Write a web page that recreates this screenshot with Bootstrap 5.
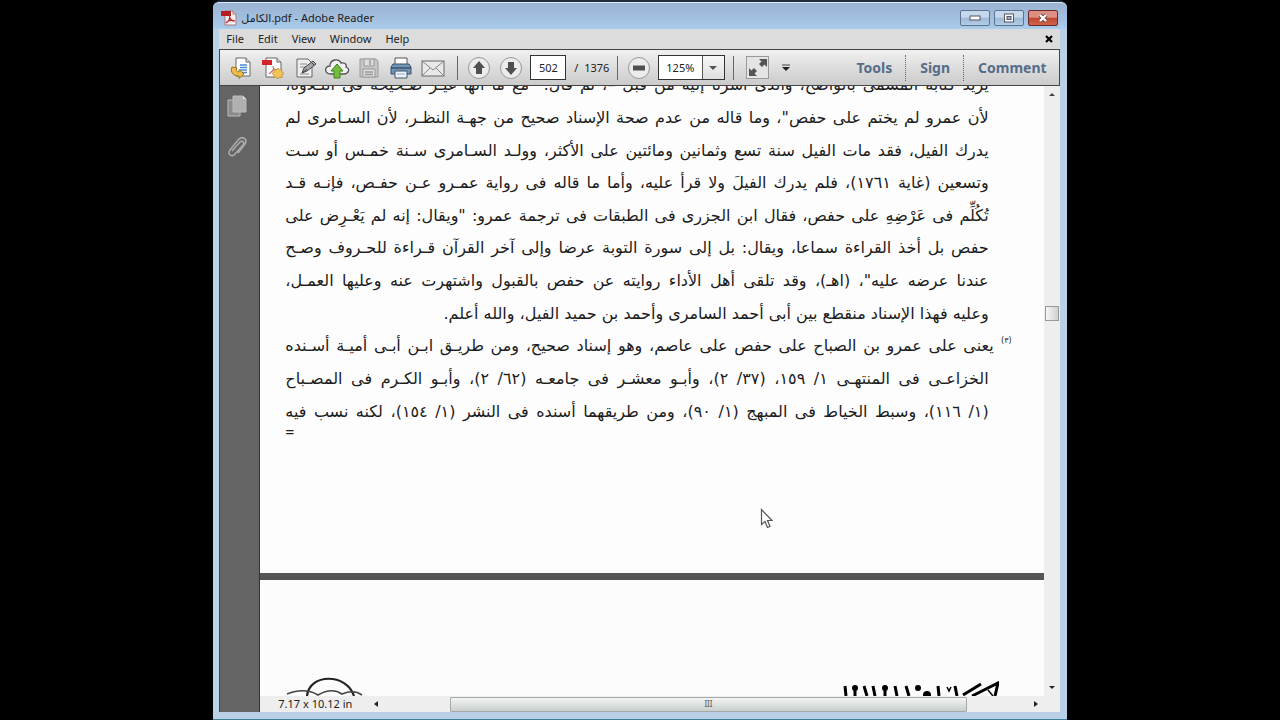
<!DOCTYPE html>
<html lang="en">
<head>
<meta charset="utf-8">
<meta name="viewport" content="width=device-width, initial-scale=1">
<title>الكامل.pdf - Adobe Reader</title>
<link href="https://cdn.jsdelivr.net/npm/bootstrap@5.3.0/dist/css/bootstrap.min.css" rel="stylesheet">
<style>
  body { background: #000; font-family: "Noto Sans", "DejaVu Sans", sans-serif; font-size: 12px; line-height: 16px; color: #222; }
  button { border: 0; background: none; padding: 0; color: inherit; }
  .app-window { background: #b9d0e6; border-top: 2px solid #1f2d3d; border-bottom: 1px solid #3d7f96; border-radius: 8px 8px 0 0; padding: 0 7px 7px 6px; }
  .title-bar { height: 27px; margin: 0 -7px 0 -6px; padding: 0 9px 0 8px; border-radius: 6px 6px 0 0; border-top: 1px solid #dbe8f5; background: linear-gradient(#9ab3d2, #a3bfdf 60%, #a9cdec); }
  .title-text { font-size: 11px; }
  .title-bar > * { margin-top: 7px; }
  .caption-btn { width: 30px; height: 16px; border: 1px solid #5b7391; border-radius: 2px; background: linear-gradient(#c6d8ec 45%, #9db8d5 50%, #b4cde6); }
  .caption-close { border-color: #6b2a28; background: linear-gradient(#dc9084 45%, #c04531 50%, #d0664a); }
  .menu-strip { height: 20px; background: #dcdcdc; }
  .menu-strip button { padding: 0 7px; font-size: 11px; }
  .tool-strip { height: 37px; border: 1px solid #444; background: linear-gradient(#f0f0f0, #cbcbcb); padding-left: 5px; }
  .tool-btn { width: 32px; height: 28px; }
  .rule-v { width: 1px; height: 24px; background: #666; }
  .dot-v { height: 26px; border-left: 1px dotted #666; margin: 0 14px 0 13px; }
  .num-box { width: 36px; height: 25px; border: 1px solid #333; background: #fff; text-align: center; font-size: 11px; padding: 0; color: #222; }
  .zoom-box { width: 67px; height: 25px; border: 1px solid #333; padding: 0 0 0 7px; font-size: 11px; color: #222; appearance: none;
    background: linear-gradient(#555, #555) 43px 0 / 1px 100% no-repeat, linear-gradient(#f8f8f8, #dedede) right / 21px 100% no-repeat #fff; }
  .zoom-arrow { right: 8px; top: 11px; border: 4px solid transparent; border-top-color: #555; border-bottom: 0; }
  .pane-link { font-size: 14px; font-weight: 700; color: #566d8a; text-decoration: none; }
  .side-pane { width: 41px; background: #646464; border-left: 1px solid #444; border-right: 1px solid #333; padding: 8px 5px 0 0; }
  .view-area { background: #565456; }
  .sheet-main { flex: 0 0 487px; background: #fdfdfd; padding: 0 55px 0 25px; }
  .sheet-next { margin-top: 7px; background: #fdfcfd; padding: 0 45px 0 25px; }
  .arabic { margin-top: -17px; height: 359px; display: grid; grid-template-columns: minmax(0, 1fr); grid-auto-rows: 1fr; align-items: center; font-family: "DejaVu Sans", sans-serif; font-size: 16px; line-height: 32px; color: #1c1c1c; }
  .arabic .full { text-align: justify; text-align-last: justify; white-space: nowrap; }
  .note-line { margin-right: -23px; }
  .note-mark { width: 18px; font-size: 8px; line-height: 22px; }
  .carry { font-size: 16px; line-height: 8px; }
  .scroll-v { width: 16px; background: #eeeeee; }
  .scroll-v .thumb { width: 14px; height: 15px; border: 1px solid #999; background: linear-gradient(90deg, #f6f6f6, #d0d0d0); }
  .foot-strip { height: 16px; background: #edeeed; }
  .size-label { width: 108px; padding-left: 18px; font-size: 11px; white-space: nowrap; }
  .scroll-h { margin-right: 20px; }
  .scroll-h .thumb { flex: 516 0 0; height: 15px; border: 1px solid #a5aaa7; border-radius: 1px; background: linear-gradient(#f2f4f3, #c9cfcc); color: #555; font-size: 8px; line-height: 12px; }
  .pointer { left: 500px; top: 422px; }
</style>
</head>
<body>
<div class="container-fluid">
 <div class="row justify-content-center">
  <main class="col-8 vh-100 d-flex flex-column app-window">
   <header class="title-bar d-flex align-items-start">
     <svg class="me-1" width="16" height="16" viewBox="0 0 16 16" aria-hidden="true"><path d="M4 1h8l3 3v11H4z" fill="#f7efef" stroke="#a77"/><path d="M12 1v3h3" fill="#ddd" stroke="#a77"/><path d="M0 1h10v5H0z" fill="#b51f24"/><path d="M5 13c3-2 4-5 3.500-7M5 13c2-3 6-3 9-2M8.500 7c1 3 3 4 5 4" fill="none" stroke="#b92a2e" stroke-width="1.300"/></svg>
     <span class="title-text" dir="ltr"><bdi>الكامل</bdi>.pdf - Adobe Reader</span>
     <div class="d-flex gap-1 ms-auto">
       <button class="caption-btn d-flex align-items-center justify-content-center" aria-label="Minimize"><svg width="12" height="6"><rect x="1" y="1" width="10" height="4" fill="#fff" stroke="#556"/></svg></button>
       <button class="caption-btn d-flex align-items-center justify-content-center" aria-label="Maximize"><svg width="12" height="10"><rect x="1.500" y="1" width="9" height="8" fill="#fff" stroke="#556"/><rect x="4" y="3.500" width="4" height="3" fill="#9cb4cf" stroke="#556"/></svg></button>
       <button class="caption-btn caption-close d-flex align-items-center justify-content-center" aria-label="Close"><svg width="12" height="10"><path d="M3 2l6 6M9 2L3 8" stroke="#644" stroke-width="4"/><path d="M3 2l6 6M9 2L3 8" stroke="#fff" stroke-width="2.400"/></svg></button>
     </div>
   </header>
   <nav class="menu-strip d-flex align-items-center" aria-label="Menu">
     <button>File</button><button>Edit</button><button>View</button><button>Window</button><button>Help</button>
     <button class="ms-auto d-flex" aria-label="Close document"><svg width="8" height="8"><path d="M1 1l6 6M7 1L1 7" stroke="#000" stroke-width="2.200"/></svg></button>
   </nav>
   <div class="tool-strip d-flex align-items-center">
     <button class="tool-btn" aria-label="Open"><svg width="24" height="24" viewBox="0 0 24 24"><path d="M7 2h10l4 4v14H7z" fill="#fff" stroke="#666"/><path d="M17 2v4h4" fill="#ddd" stroke="#666"/><path d="M11 9h7M11 11.500h7M11 14h7M13 16.500h5" stroke="#4b8fd0" stroke-width="1.300"/><path d="M3 11c-2 5 1 9 7 9v2.500l5-4.500-5-4.500V16c-3 0-3-2-2-4z" fill="#f2bd4b" stroke="#99701e"/></svg></button>
     <button class="tool-btn" aria-label="Create PDF"><svg width="24" height="24" viewBox="0 0 24 24"><path d="M5 2h11l4 4v15H5z" fill="#fafafa" stroke="#666"/><path d="M16 2v4h4" fill="#ddd" stroke="#666"/><path d="M1 4h10v5H1z" fill="#d5232b"/><path d="M8 18c4-2 5-5 4-8M8 18c3-4 5-4 8-4M12 12l4 3" fill="none" stroke="#b66"/><path d="M17 12l1.500 2 2.500-.5-.2 2.500 2.200 1.500-2 1.500.2 2.500-2.500-.3L17 23l-1.700-1.800-2.500.3.200-2.500-2-1.500 2.200-1.500-.2-2.500 2.500.5z" fill="#f3c35b" stroke="#c08f2d" stroke-width=".8"/></svg></button>
     <button class="tool-btn" aria-label="Edit"><svg width="24" height="24" viewBox="0 0 24 24"><path d="M4 3h11l4 4v14H4z" fill="#eee" stroke="#666"/><path d="M7 8h7M7 11h6M7 18h9" stroke="#888"/><path d="M9 17l2-5 9-7 3 3-9 7z" fill="#a3a6aa" stroke="#444"/><path d="M9 17l5-4M18 6l3 3" stroke="#444"/></svg></button>
     <button class="tool-btn" aria-label="Upload"><svg width="26" height="24" viewBox="0 0 26 24"><path d="M7 18C0 18 0 10 6 10 6 3 15 2 17 7c5-1 6 3 5 4 5 2 2 7-2 7z" fill="#f1f1f1" stroke="#555" stroke-width="1.300"/><path d="M13 8l6 7h-3v7h-6v-7H7z" fill="#72bd3b" stroke="#3e8122"/></svg></button>
     <button class="tool-btn" aria-label="Save" disabled><svg width="22" height="22" viewBox="0 0 22 22"><path d="M2 2h16l2 2v16H2z" fill="#c6c6c6" stroke="#999"/><path d="M6 2h10v7H6zM5 12h12v8H5z" fill="#ddd" stroke="#999"/><path d="M12 3v5M7 15h8M7 17.500h8" stroke="#999" stroke-width="1.500"/></svg></button>
     <button class="tool-btn" aria-label="Print"><svg width="24" height="24" viewBox="0 0 24 24"><path d="M6 2h12v8H6z" fill="#fff" stroke="#555"/><path d="M4 8h16l2 3v7H2v-7z" fill="#7195b5" stroke="#38526d"/><path d="M2 12h20" stroke="#38526d" stroke-width="1.500"/><path d="M6 15h12v7H6z" fill="#e9f2fa" stroke="#456"/><path d="M8 18h8" stroke="#aab"/></svg></button>
     <button class="tool-btn" aria-label="E-mail"><svg width="24" height="22" viewBox="0 0 24 22"><rect x="1" y="4" width="22" height="15" fill="#e9e9e9" stroke="#666"/><path d="M1 4l11 9L23 4M2 18l7-7M22 18l-7-7" fill="none" stroke="#888"/></svg></button>
     <div class="rule-v ms-2 me-1"></div>
     <button class="tool-btn" aria-label="Previous page"><svg width="24" height="24" viewBox="0 0 24 24"><circle cx="13" cy="12" r="10.500" fill="#ececec" stroke="#999"/><path d="M13 5l6 7h-3v6h-6v-6H7z" fill="#505050"/></svg></button>
     <button class="tool-btn" aria-label="Next page"><svg width="24" height="24" viewBox="0 0 24 24"><circle cx="13" cy="12" r="10.500" fill="#ececec" stroke="#999"/><path d="M13 19l6-7h-3V6h-6v6H7z" fill="#505050"/></svg></button>
     <input class="num-box ms-1" type="text" value="502" aria-label="Page number">
     <span class="title-text ms-2">/&nbsp; 1376</span>
     <div class="rule-v ms-2 me-1"></div>
     <button class="tool-btn" aria-label="Zoom out"><svg width="24" height="24" viewBox="0 0 24 24"><circle cx="13" cy="12" r="10.500" fill="#ececec" stroke="#999"/><path d="M7 9.500h12v5H7z" fill="#505050"/></svg></button>
     <div class="position-relative d-flex ms-1"><select class="zoom-box rounded-0" aria-label="Zoom"><option>125%</option></select><span class="zoom-arrow position-absolute pe-none"></span></div>
     <div class="rule-v ms-2 me-2"></div>
     <button class="tool-btn" aria-label="Read mode"><svg width="24" height="24" viewBox="0 0 24 24"><rect x=".5" y=".5" width="22" height="22" fill="#e4e4e4" stroke="#999"/><path d="M13 3h8v8l-2.500-2.500-2.500 2.500-3-3 2.500-2.500zM3 12l2.500 2.500L8 12l3 3-2.500 2.500L11 20H3z" fill="#555"/></svg></button>
     <button class="ms-2 d-flex" aria-label="More tools"><svg width="8" height="8"><path d="M0 1h8" stroke="#444"/><path d="M0 3h8L4 7z" fill="#222"/></svg></button>
     <div class="d-flex align-items-center ms-auto pe-2 me-1">
       <a class="pane-link" href="#tools">Tools</a><span class="dot-v"></span>
       <a class="pane-link" href="#sign">Sign</a><span class="dot-v"></span>
       <a class="pane-link" href="#comment">Comment</a>
     </div>
   </div>
   <div class="d-flex flex-fill overflow-hidden">
     <aside class="side-pane d-flex flex-column align-items-center gap-3 flex-shrink-0">
       <button aria-label="Page thumbnails"><svg width="22" height="24" viewBox="0 0 22 24"><path d="M2 6h12v16H2z" fill="#8a8a8a" stroke="#bbb"/><path d="M7 2h10l3 3v13H7z" fill="#b0b0b0" stroke="#bbb"/><path d="M17 2v3h3" fill="#ddd"/></svg></button>
       <button aria-label="Attachments"><svg width="22" height="26" viewBox="0 0 22 26"><path d="M6 17l8-9c2-2 5 0 3 3l-8 9c-3 4-8 0-5-4l8-10c4-5 10-1 7 4l-7 9" fill="none" stroke="#aaa" stroke-width="1.600"/></svg></button>
     </aside>
     <div class="d-flex flex-column flex-fill overflow-hidden">
       <div class="d-flex flex-fill overflow-hidden">
         <section class="view-area position-relative d-flex flex-column flex-fill overflow-hidden">
           <article class="sheet-main">
             <div class="arabic" dir="rtl" lang="ar">
               <div class="full">يريد كتابه المسمى بالواضح، والذى أشرنا إليه من قبل –، ثم قال: "مع ما أنها غيـر صـحيحة فى التـلاوة،</div>
               <div class="full">لأن عمرو لم يختم على حفص"، وما قاله من عدم صحة الإسناد صحيح من جهـة النظـر، لأن السـامرى لم</div>
               <div class="full">يدرك الفيل، فقد مات الفيل سنة تسع وثمانين ومائتين على الأكثر، وولـد السـامرى سـنة خمـس أو سـت</div>
               <div class="full">وتسعين (غاية ١٧٦١)، فلم يدرك الفيلَ ولا قرأ عليه، وأما ما قاله فى رواية عمـرو عـن حفـص، فإنـه قـد</div>
               <div class="full">تُكُلِّم فى عَرْضِهِ على حفص، فقال ابن الجزرى فى الطبقات فى ترجمة عمرو: "ويقال: إنه لم يَعْـرِض على</div>
               <div class="full">حفص بل أخذ القراءة سماعا، ويقال: بل إلى سورة التوبة عرضا وإلى آخر القرآن قـراءة للحـروف وصـح</div>
               <div class="full">عندنا عرضه عليه"، (اهـ)، وقد تلقى أهل الأداء روايته عن حفص بالقبول واشتهرت عنه وعليها العمـل،</div>
               <div>وعليه فهذا الإسناد منقطع بين أبى أحمد السامرى وأحمد بن حميد الفيل، والله أعلم.</div>
               <div class="note-line d-flex"><span class="note-mark flex-shrink-0">(٣)</span><span class="full flex-fill">يعنى على عمرو بن الصباح على حفص على عاصم، وهو إسناد صحيح، ومن طريـق ابـن أبـى أميـة أسـنده</span></div>
               <div class="full">الخزاعـى فى المنتهـى ١/ ١٥٩، (٣٧/ ٢)، وأبـو معشـر فى جامعـه (٦٢/ ٢)، وأبـو الكـرم فى المصـباح</div>
               <div class="full">(١/ ١١٦)، وسبط الخياط فى المبهج (١/ ٩٠)، ومن طريقهما أسنده فى النشر (١/ ١٥٤)، لكنه نسب فيه</div>
             </div>
             <div class="carry">=</div>
           </article>
           <article class="sheet-next d-flex flex-fill align-items-end justify-content-between">
             <svg width="80" height="20" viewBox="0 0 80 20" aria-hidden="true"><path d="M22 20C24-3 62-3 69 20" fill="none" stroke="#222" stroke-width="2.200"/><path d="M2 18q18-7 31 1 14-8 24-1 12-5 20 1" fill="none" stroke="#444" stroke-width="1.600"/></svg>
             <svg width="160" height="15" viewBox="0 0 160 15" aria-hidden="true"><g stroke="#000" stroke-width="3" fill="none"><path d="M6 5l1 10M25 5l3 10M34 5l2 10M56 5l2 10M67 5l3 10M99 5l1 10M116 5l2 10"/><path d="M16 9v6M46 9v6M124 14l18-11M133 15l26-13-3 13" /><path d="M149 9l5 6M108 6l2 4 2-4" stroke-width="1.500"/></g><circle cx="16" cy="7" r="3"/><circle cx="46" cy="7" r="3"/><circle cx="79" cy="7" r="3"/><circle cx="88" cy="14" r="4"/></svg>
           </article>
           <svg class="pointer position-absolute" width="14" height="22" viewBox="0 0 14 22" aria-hidden="true"><path d="M1.500 1.500v15l3.500-3 2.500 6 2.500-1-2.500-6h4.500z" fill="#fff" stroke="#555" stroke-width="1.200"/></svg>
         </section>
         <div class="scroll-v d-flex flex-column align-items-center flex-shrink-0 py-1">
           <svg width="8" height="8"><path d="M1 6h6L4 3z" fill="#444"/></svg>
           <div style="flex:209 0 0"></div><div class="thumb"></div><div style="flex:366 0 0"></div>
           <svg width="8" height="8"><path d="M1 2h6L4 5z" fill="#222"/></svg>
         </div>
       </div>
       <footer class="foot-strip d-flex align-items-center flex-shrink-0">
         <span class="size-label flex-shrink-0">7.17 x 10.12 in</span>
         <div class="scroll-h d-flex align-items-center flex-fill ps-1">
           <svg width="8" height="8"><path d="M6 1v6L2 4z" fill="#222"/></svg>
           <div style="flex:70 0 0"></div><div class="thumb text-center">III</div><div style="flex:65 0 0"></div>
           <svg class="me-n1" width="8" height="8"><path d="M2 1v6l4-3z" fill="#222"/></svg>
         </div>
       </footer>
     </div>
   </div>
  </main>
 </div>
</div>
<script src="https://cdn.jsdelivr.net/npm/bootstrap@5.3.0/dist/js/bootstrap.bundle.min.js"></script>
</body>
</html>
